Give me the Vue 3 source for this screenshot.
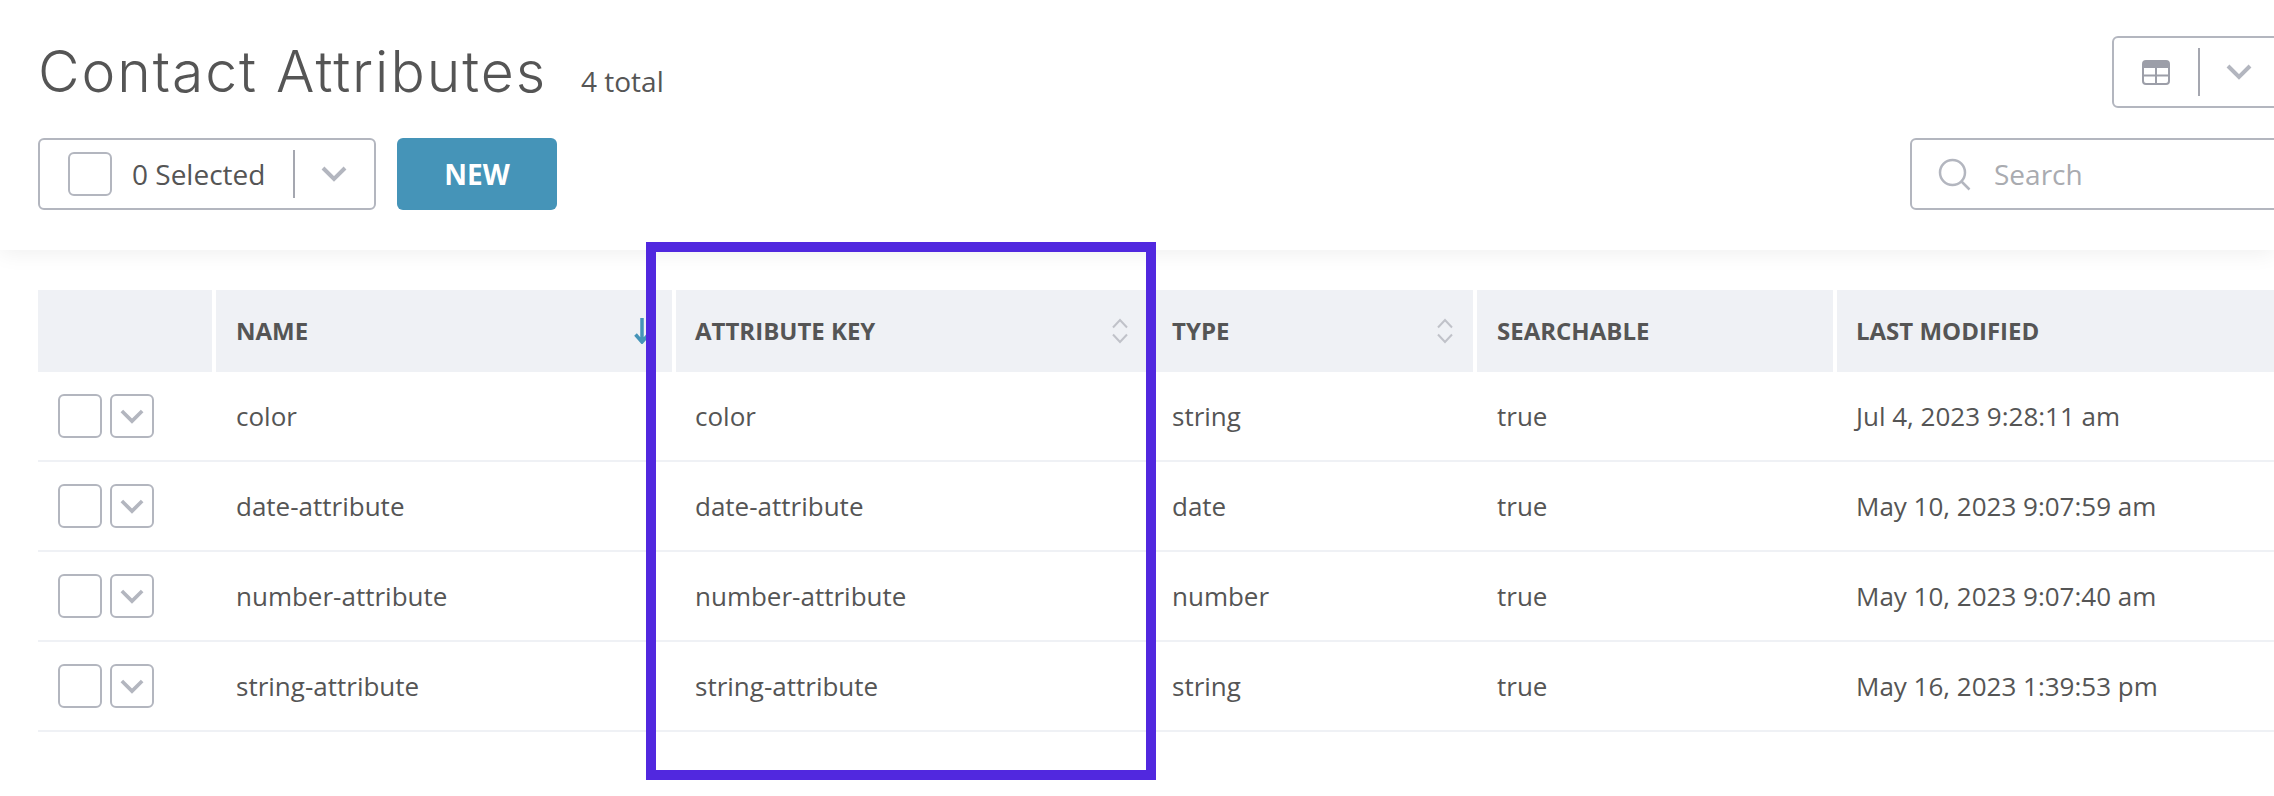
<script setup>
const rows = [
  { name: 'color', type: 'string', searchable: 'true', modified: 'Jul 4, 2023 9:28:11 am' },
  { name: 'date-attribute', type: 'date', searchable: 'true', modified: 'May 10, 2023 9:07:59 am' },
  { name: 'number-attribute', type: 'number', searchable: 'true', modified: 'May 10, 2023 9:07:40 am' },
  { name: 'string-attribute', type: 'string', searchable: 'true', modified: 'May 16, 2023 1:39:53 pm' }
]
</script>

<template>
  <div class="page">
    <header class="top">
      <div class="row-title">
        <div class="title-group">
          <h1>Contact Attributes</h1>
          <span class="total">4 total</span>
        </div>
        <div class="view-btn">
          <svg class="table-ico" width="28" height="25" viewBox="0 0 28 25">
            <rect x="1" y="1" width="26" height="23" rx="3" fill="#fff" stroke="#9c9ea8" stroke-width="2" />
            <path d="M1 4a3 3 0 0 1 3-3h20a3 3 0 0 1 3 3v4H1z" fill="#9c9ea8" />
            <path d="M1 15.500h26M14 8v16" stroke="#9c9ea8" stroke-width="2" fill="none" />
          </svg>
          <i class="sep"></i>
          <svg class="chev" width="26" height="16" viewBox="0 0 26 16"><path d="M2 2l11 11L24 2" fill="none" stroke="#b3b6bf" stroke-width="4" /></svg>
        </div>
      </div>
      <div class="row-tools">
        <div class="tools-left">
          <div class="select">
            <span class="check"></span>
            <span class="sel-text">0 Selected</span>
            <i class="sep"></i>
            <svg class="chev" width="26" height="16" viewBox="0 0 26 16"><path d="M2 2l11 11L24 2" fill="none" stroke="#b3b6bf" stroke-width="4" /></svg>
          </div>
          <button class="new">NEW</button>
        </div>
        <div class="search">
          <svg width="33" height="33" viewBox="0 0 33 33"><circle cx="14.500" cy="14.500" r="12.500" fill="none" stroke="#b3b6bf" stroke-width="2.500" /><path d="M23.500 23.500l8 8" stroke="#b3b6bf" stroke-width="2.500" fill="none" /></svg>
          <span>Search</span>
        </div>
      </div>
    </header>

    <section class="table">
      <div class="tr head">
        <div class="th"></div>
        <div class="th">NAME
          <svg class="sort down" width="16" height="26" viewBox="0 0 16 26"><path d="M8 0v23M1.500 16.500L8 24l6.500-7.500" fill="none" stroke="#4594b8" stroke-width="3.500" /></svg>
        </div>
        <div class="th">ATTRIBUTE KEY
          <svg class="sort" width="16" height="26" viewBox="0 0 16 26"><path d="M1 9.500L8 2l7 7.500M1 16.500L8 24l7-7.500" fill="none" stroke="#c0c2c9" stroke-width="2" /></svg>
        </div>
        <div class="th">TYPE
          <svg class="sort" width="16" height="26" viewBox="0 0 16 26"><path d="M1 9.500L8 2l7 7.500M1 16.500L8 24l7-7.500" fill="none" stroke="#c0c2c9" stroke-width="2" /></svg>
        </div>
        <div class="th">SEARCHABLE</div>
        <div class="th">LAST MODIFIED</div>
      </div>
      <div v-for="r in rows" :key="r.name" class="tr body">
        <div class="td ctrl">
          <span class="check"></span>
          <span class="check mini"><svg width="24" height="15" viewBox="0 0 26 16"><path d="M2 2l11 11L24 2" fill="none" stroke="#b3b6bf" stroke-width="4" /></svg></span>
        </div>
        <div class="td">{{ r.name }}</div>
        <div class="td">{{ r.name }}</div>
        <div class="td">{{ r.type }}</div>
        <div class="td">{{ r.searchable }}</div>
        <div class="td">{{ r.modified }}</div>
      </div>
    </section>

    <div class="highlight"></div>
  </div>
</template>

<style>
html, body { margin: 0; background: #fff; overflow: hidden; }
</style>

<style scoped>
.page {
  position: relative;
  width: 2274px;
  height: 796px;
  overflow: hidden;
  background: #fff;
  font-family: "Open Sans", sans-serif;
  color: #555;
}
.top {
  height: 250px;
  box-sizing: border-box;
  padding: 36px 0 0 38px;
  background: #fff;
  box-shadow: 0 2px 22px rgba(0, 0, 0, 0.07);
  position: relative;
}
.row-title, .row-tools {
  display: flex;
  justify-content: space-between;
  align-items: flex-start;
}
.row-title { height: 102px; }
.title-group { display: flex; align-items: baseline; gap: 34px; }
h1 {
  margin: 0;
  font-family: Inter, sans-serif;
  font-weight: 300;
  font-size: 57px;
  letter-spacing: 1.950px;
  line-height: 72px;
  color: #555;
}
.total { font-size: 28px; }
.view-btn, .select, .search {
  display: flex;
  align-items: center;
  box-sizing: border-box;
  height: 72px;
  border: 2px solid #b3b6bf;
  border-radius: 6px;
  background: #fff;
}
.view-btn {
  width: 200px;
  margin-right: -38px;
  padding-left: 28px;
  flex: none;
}
.view-btn .sep { margin: 0 26px 0 28px; }
.sep {
  display: block;
  width: 2px;
  height: 48px;
  background: #a5a7b0;
}
.tools-left { display: flex; gap: 21px; }
.select { width: 338px; padding-left: 28px; }
.check {
  display: flex;
  align-items: center;
  justify-content: center;
  box-sizing: border-box;
  width: 44px;
  height: 44px;
  border: 2px solid #b3b6bf;
  border-radius: 6px;
}
.sel-text { font-size: 28px; margin-left: 20px; width: 161px; white-space: nowrap; }
.select .sep { margin-right: 26px; }
.new {
  width: 160px;
  height: 72px;
  border: 0;
  border-radius: 6px;
  background: #4594b8;
  color: #fff;
  font-family: "Open Sans", sans-serif;
  font-weight: 700;
  font-size: 28px;
}
.search {
  width: 440px;
  margin-right: -76px;
  padding-left: 26px;
  gap: 23px;
  flex: none;
  color: #a9abb0;
  font-size: 28px;
}
.table { margin: 40px 0 0 38px; }
.tr {
  display: grid;
  grid-template-columns: 174px 456px 472px 321px 356px 460px;
  column-gap: 4px;
}
.th {
  position: relative;
  height: 82px;
  display: flex;
  align-items: center;
  padding: 0 0 2px 20px;
  box-sizing: border-box;
  background: #eff1f5;
  font-weight: 700;
  font-size: 24px;
  color: #555;
}
.th:nth-child(3), .th:nth-child(6), .td:nth-child(3), .td:nth-child(6) { padding-left: 19px; }
.sort { position: absolute; right: 20px; top: 28px; }
.sort.down { right: 22px; }
.body { border-bottom: 2px solid #eff1f5; column-gap: 4px; }
.td {
  height: 88px;
  display: flex;
  align-items: center;
  padding-left: 20px;
  box-sizing: border-box;
  font-size: 26px;
  white-space: nowrap;
}
.ctrl { padding-left: 20px; gap: 8px; }
.highlight {
  position: absolute;
  left: 646px;
  top: 242px;
  width: 510px;
  height: 538px;
  box-sizing: border-box;
  border: 10px solid #5128df;
}
</style>
